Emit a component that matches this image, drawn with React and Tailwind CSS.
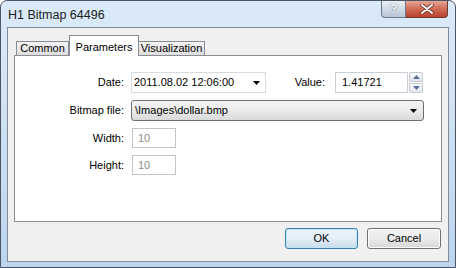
import React from 'react';

const font = { fontFamily: '"Liberation Sans", Arial, sans-serif' };

const Arrow = ({ className = '' }) => (
  <svg width="7" height="4" viewBox="0 0 7 4" className={className}>
    <path d="M0 0h7L3.5 4z" fill="#000" />
  </svg>
);

const Label = ({ children }) => (
  <div className="w-[109px] pr-0 text-right text-[11px] text-[#000]">{children}</div>
);

const App = () => {
  return (
    <div className="w-[456px] h-[268px] bg-white">
      <div
        className="w-[456px] h-[268px] rounded-t-[7px] border border-[#4a5566] bg-gradient-to-b from-[#dbeaf8] via-[#cde0f3] to-[#bcd5ef] flex flex-col"
        style={font}
      >
        {/* title bar */}
        <div className="h-[26px] flex items-start shrink-0">
          <div className="pl-[7px] pt-[5px] text-[12.5px] text-[#1b1b1b]">H1 Bitmap 64496</div>
          <div className="ml-auto mr-[7px] flex">
            <div className="w-[25px] h-[17px] rounded-bl-[4px] border border-t-0 border-[#6b7686] bg-gradient-to-b from-[#e9eef4] to-[#b9c6d6] flex items-center justify-center text-[13px] font-bold text-[#f8fbff] [text-shadow:0_0_1px_#2a3a50]">
              ?
            </div>
            <div className="w-[42px] h-[17px] rounded-br-[4px] border border-t-0 border-l-0 border-[#6b3a30] bg-gradient-to-b from-[#e7a597] via-[#d06a55] to-[#b8412d] flex items-center justify-center">
              <svg width="14" height="10" viewBox="0 0 14 10">
                <path d="M2 1l10 8M12 1L2 9" stroke="#5a1e14" strokeWidth="3.4" strokeLinecap="round" />
                <path d="M2 1l10 8M12 1L2 9" stroke="#fff" strokeWidth="2" strokeLinecap="round" />
              </svg>
            </div>
          </div>
        </div>

        {/* client area */}
        <div className="mx-[6px] h-[235px] border border-[#848a93] bg-[#f0f0f0] flex flex-col">
          {/* tabs */}
          <div className="mt-[7px] ml-[7px] flex items-end h-[20px] text-[11px]">
            <div className="h-[14px] w-[53px] border border-b-0 border-[#898c95] bg-gradient-to-b from-[#f3f3f3] to-[#dedede] flex items-center justify-center mb-0 ml-px">
              Common
            </div>
            <div className="h-[21px] w-[70px] -mb-px border border-b-0 border-[#898c95] bg-white flex items-start justify-center pt-[3px] z-10 relative">
              Parameters
            </div>
            <div className="h-[14px] w-[66px] border border-b-0 border-l-0 border-[#898c95] bg-gradient-to-b from-[#f3f3f3] to-[#dedede] flex items-center justify-center">
              Visualization
            </div>
          </div>

          {/* panel */}
          <div className="mx-[6px] h-[167px] border border-[#898c95] bg-white pt-[16px] flex flex-col text-[11px]">
            <div className="flex items-center h-[21px]">
              <Label>Date:</Label>
              <div className="ml-[7px] w-[135px] h-[21px] border border-[#d9dadd] bg-white flex items-center pl-[2px] pr-[5px]">
                <span>2011.08.02 12:06:00</span>
                <Arrow className="ml-auto" />
              </div>
              <div className="ml-auto w-[57px] text-right">Value:</div>
              <div className="ml-[10px] w-[73px] h-[21px] border border-[#c9cfd8] bg-white flex items-center pl-[6px]">
                1.41721
              </div>
              <div className="ml-px mr-[18px] w-[14px] h-[21px] flex flex-col gap-px">
                <div className="h-[10px] border border-[#c3c9d2] rounded-t-[2px] bg-gradient-to-b from-[#fafbfc] to-[#e3e7ee] flex items-center justify-center">
                  <svg width="7" height="4" viewBox="0 0 7 4"><path d="M0 4h7L3.5 0z" fill="#5a6f99" /></svg>
                </div>
                <div className="h-[10px] border border-[#c3c9d2] rounded-b-[2px] bg-gradient-to-b from-[#fafbfc] to-[#e3e7ee] flex items-center justify-center">
                  <svg width="7" height="4" viewBox="0 0 7 4"><path d="M0 0h7L3.5 4z" fill="#5a6f99" /></svg>
                </div>
              </div>
            </div>

            <div className="flex items-center h-[21px] mt-[7px]">
              <Label>Bitmap file:</Label>
              <div className="ml-[7px] w-[293px] h-[21px] rounded-[3px] border border-[#707070] bg-gradient-to-b from-[#f4f4f4] via-[#ebebeb] to-[#d9d9d9] flex items-center pl-[3px] pr-[6px]">
                <span>\Images\dollar.bmp</span>
                <Arrow className="ml-auto" />
              </div>
            </div>

            <div className="flex items-center h-[20px] mt-[7px]">
              <Label>Width:</Label>
              <div className="ml-[8px] w-[44px] h-[20px] border border-[#c2c4c8] bg-white flex items-center pl-[5px] text-[#8d8d8d]">
                10
              </div>
            </div>

            <div className="flex items-center h-[20px] mt-[7px]">
              <Label>Height:</Label>
              <div className="ml-[8px] w-[44px] h-[20px] border border-[#c2c4c8] bg-white flex items-center pl-[5px] text-[#8d8d8d]">
                10
              </div>
            </div>
          </div>

          {/* buttons */}
          <div className="mt-[6px] flex justify-end gap-[9px] pr-[7px] text-[11px]">
            <button className="w-[73px] h-[21px] rounded-[3px] border border-[#3c7fb1] bg-gradient-to-b from-[#eaf6fd] via-[#e3eef7] to-[#c9dcea] shadow-[inset_0_0_0_1px_#bfe6f9]">
              OK
            </button>
            <button className="w-[74px] h-[21px] rounded-[3px] border border-[#707070] bg-gradient-to-b from-[#f2f2f2] via-[#ebebeb] to-[#d6d6d6] shadow-[inset_0_0_0_1px_#fcfcfc]">
              Cancel
            </button>
          </div>
        </div>
      </div>
    </div>
  );
};

export default App;
